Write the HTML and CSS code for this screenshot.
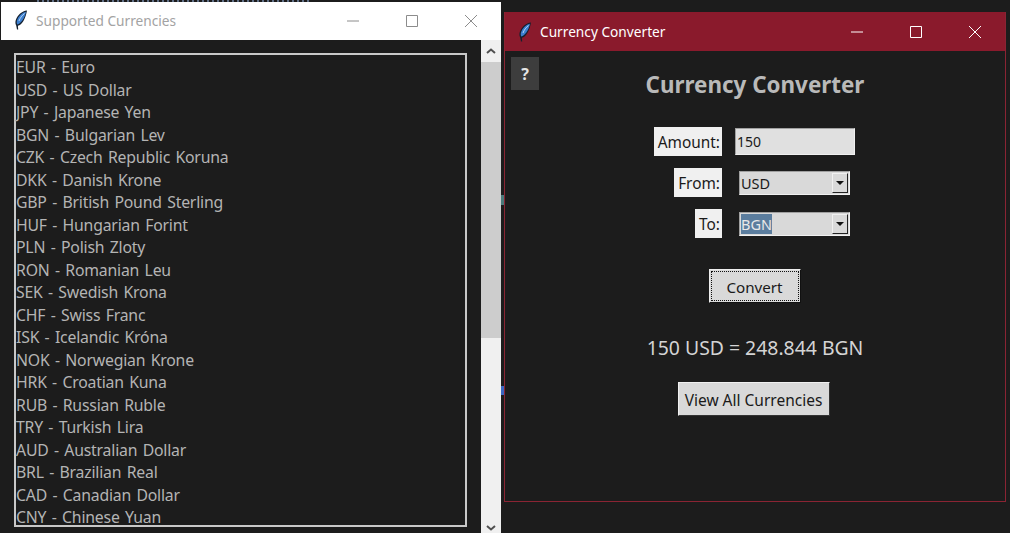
FILE: index.html
```html
<!DOCTYPE html>
<html>
<head>
	<title>Currency Converter</title>
	<link rel="stylesheet" href="styles.css">
</head>

<body>

	<svg width="0" height="0" class="defs">
		<symbol id="feather" viewBox="0 0 14 20">
			<path d="M13 .5 C8 1 3.500 5 1.800 10 C1.200 12 1.300 14 2.200 15.500 L3 19.500 L4.200 19.500 L3.900 15.800 C8 15 11.500 9 13 .5 Z" fill="#14202e"/>
			<path d="M12 1.800 C8 2.500 4.500 6 3 10.500 C2.600 12 2.700 13.500 3.300 14.500 C7 13.500 10.500 8.500 12 1.800 Z" fill="#3c7fd0"/>
			<path d="M10.500 3.500 C8 5.500 6 8 5 11" stroke="#b5d5f2" stroke-width="1" fill="none"/>
		</symbol>
	</svg>

	<!-- bits of whatever is behind the two windows -->
	<div class="behind behind-top"></div>
	<div class="behind behind-a"></div>
	<div class="behind behind-b"></div>

	<div class="window window-list">
		<div class="titlebar">
			<svg class="feather"><use href="#feather"/></svg>
			<span class="title">Supported Currencies</span>
			<div class="controls">
				<svg class="ctl" viewBox="0 0 12 12"><path d="M0 6H12"/></svg>
				<svg class="ctl" viewBox="0 0 12 12"><path d="M.5 .5H11.500V11.500H.5Z"/></svg>
				<svg class="ctl" viewBox="0 0 12 12"><path d="M0 0L12 12M12 0L0 12"/></svg>
			</div>
		</div>
		<div class="list-body">
			<div class="list-pane">
				<ul class="currencies">
					<li>EUR - Euro</li>
					<li>USD - US Dollar</li>
					<li>JPY - Japanese Yen</li>
					<li>BGN - Bulgarian Lev</li>
					<li>CZK - Czech Republic Koruna</li>
					<li>DKK - Danish Krone</li>
					<li>GBP - British Pound Sterling</li>
					<li>HUF - Hungarian Forint</li>
					<li>PLN - Polish Zloty</li>
					<li>RON - Romanian Leu</li>
					<li>SEK - Swedish Krona</li>
					<li>CHF - Swiss Franc</li>
					<li>ISK - Icelandic Króna</li>
					<li>NOK - Norwegian Krone</li>
					<li>HRK - Croatian Kuna</li>
					<li>RUB - Russian Ruble</li>
					<li>TRY - Turkish Lira</li>
					<li>AUD - Australian Dollar</li>
					<li>BRL - Brazilian Real</li>
					<li>CAD - Canadian Dollar</li>
					<li>CNY - Chinese Yuan</li>
				</ul>
			</div>
			<div class="scrollbar">
				<svg class="arrow" viewBox="0 0 10 6"><path d="M1 5L5 1.500L9 5"/></svg>
				<div class="thumb"></div>
				<div class="track"></div>
				<svg class="arrow" viewBox="0 0 10 6"><path d="M1 1L5 4.500L9 1"/></svg>
			</div>
		</div>
	</div>

	<div class="window window-main">
		<div class="titlebar titlebar-active">
			<svg class="feather"><use href="#feather"/></svg>
			<span class="title">Currency Converter</span>
			<div class="controls">
				<svg class="ctl" viewBox="0 0 12 12"><path d="M0 6H12"/></svg>
				<svg class="ctl" viewBox="0 0 12 12"><path d="M.5 .5H11.500V11.500H.5Z"/></svg>
				<svg class="ctl" viewBox="0 0 12 12"><path d="M0 0L12 12M12 0L0 12"/></svg>
			</div>
		</div>
		<div class="main-body">
			<button class="help">?</button>
			<div class="converter">
				<h1>Currency Converter</h1>
				<div class="form">
					<div class="row">
						<div class="label-col"><label>Amount:</label></div>
						<div class="entry">150</div>
					</div>
					<div class="row">
						<div class="label-col"><label>From:</label></div>
						<div class="combo"><span>USD</span><i class="drop"></i></div>
					</div>
					<div class="row">
						<div class="label-col"><label>To:</label></div>
						<div class="combo"><span class="selected">BGN</span><i class="drop"></i></div>
					</div>
				</div>
				<button class="btn btn-convert"><span>Convert</span></button>
				<p class="result">150 USD = 248.844 BGN</p>
				<button class="btn btn-view">View All Currencies</button>
			</div>
		</div>
	</div>

</body>
</html>
```

FILE: styles.css
```css
html, body {
	margin: 0;
	height: 100%;
}
body {
	position: relative;
	overflow: hidden;
	width: 1010px;
	height: 533px;
	background-color: #1c1c1c;
	font-family: "Noto Sans", "Open Sans", sans-serif;
	font-size: 16px;
}
.defs {
	position: absolute;
}

.behind {
	position: absolute;
}
.behind-top {
	left: 37px;
	top: 0;
	width: 273px;
	height: 2px;
	background-image: repeating-linear-gradient(to right, #5f6f86 0 2px, #1c1c1c 2px 5px);
}
.behind-a {
	left: 501px;
	top: 195px;
	width: 3px;
	height: 10px;
	background-color: #4a7a7a;
}
.behind-b {
	left: 501px;
	top: 386px;
	width: 3px;
	height: 9px;
	background-color: #3a66c0;
}

/* windows sit on a desktop, so these two are placed by hand */
.window {
	position: absolute;
	display: flex;
	flex-direction: column;
	box-sizing: border-box;
	background-color: #1c1c1c;
}
.window-list {
	left: 1px;
	top: 2px;
	width: 500px;
	height: 540px;
}
.window-main {
	left: 504px;
	top: 12px;
	width: 502px;
	height: 490px;
	border: 1px solid #8a2433;
	border-top: none;
}

.titlebar {
	display: flex;
	align-items: center;
	flex: none;
	height: 38px;
	background-color: #fff;
	color: #a3a3a3;
	font-size: 13.7px;
}
.window-list .title {
	margin-top: -2px;
}
.titlebar-active {
	height: 39px;
	background-color: #8a1a2c;
	color: #fff;
}
.feather {
	flex: none;
	width: 14px;
	height: 20px;
	margin-left: 13px;
	margin-right: 8px;
}
.window-list .feather {
	margin-top: -2px;
}
.title {
	flex: 1;
}
.controls {
	display: flex;
	align-items: center;
}
.ctl {
	width: 12px;
	height: 12px;
	padding: 0 17px;
	margin-left: 13px;
	fill: none;
	stroke: #8c8c8c;
	stroke-width: 1;
}
.controls .ctl:first-child {
	margin-left: 0;
}
.controls .ctl:last-child {
	margin-right: 7px;
}
.titlebar-active .ctl {
	stroke: #fff;
}

.list-body {
	display: flex;
	flex: 1;
	min-height: 0;
}
.list-pane {
	flex: 1;
	min-width: 0;
	padding: 13px 13px 0 13px;
}
.currencies {
	box-sizing: border-box;
	width: 453px;
	height: 474px;
	margin: 0;
	padding: 1px 0 0 0;
	list-style: none;
	border: 2px solid #c8c8c8;
	color: #b4b4b4;
	font-size: 15.8px;
	line-height: 22.5px;
	letter-spacing: -0.2px;
	word-spacing: 1.5px;
}

.scrollbar {
	display: flex;
	flex-direction: column;
	align-items: center;
	flex: none;
	width: 20px;
	height: 499px;
	background-color: #f0f0f0;
}
.arrow {
	flex: none;
	width: 10px;
	height: 6px;
	margin: 8px 0;
	fill: none;
	stroke: #505050;
	stroke-width: 2;
}
.thumb {
	flex: none;
	width: 100%;
	height: 276px;
	background-color: #cdcdcd;
}
.track {
	flex: 1;
}

.main-body {
	position: relative;
	flex: 1;
}
.help {
	position: absolute;
	left: 6px;
	top: 6px;
	width: 28px;
	height: 33px;
	padding: 0;
	border: none;
	background-color: #3d3d3d;
	color: #e6e6e6;
	font-family: inherit;
	font-size: 16px;
	font-weight: bold;
}
.converter {
	display: flex;
	flex-direction: column;
	align-items: center;
	padding-top: 18px;
}
h1 {
	margin: 0;
	color: #b9b9b9;
	font-size: 22.4px;
	font-weight: bold;
	line-height: 32px;
}

.form {
	display: flex;
	flex-direction: column;
	gap: 12px;
	width: 200px;
	margin-top: 26px;
	margin-right: 2px;
}
.row {
	display: flex;
	align-items: center;
	height: 29px;
}
.label-col {
	display: flex;
	justify-content: flex-end;
	flex: none;
	width: 68px;
	margin-right: 13px;
}
label {
	box-sizing: border-box;
	height: 29px;
	padding: 2px 2px 0 4px;
	background-color: #f0f0f0;
	color: #1a1a1a;
	font-size: 15.4px;
	line-height: 27px;
}
.entry {
	box-sizing: border-box;
	flex: none;
	width: 120px;
	height: 27px;
	padding-left: 1px;
	border: 1px solid #f0f0f0;
	border-color: #a0a0a0 #f0f0f0 #f0f0f0 #a0a0a0;
	background-color: #e0e0e0;
	color: #1a1a1a;
	font-size: 14px;
	line-height: 25px;
}
.combo {
	display: flex;
	align-items: center;
	justify-content: space-between;
	box-sizing: border-box;
	flex: none;
	width: 111px;
	height: 24px;
	margin-left: 4px;
	padding: 0 1px;
	border: 1px solid #f0f0f0;
	border-color: #a0a0a0 #f0f0f0 #f0f0f0 #a0a0a0;
	background-color: #d9d9d9;
	color: #1a1a1a;
	font-size: 14.5px;
}
.selected {
	background-color: #5b7d9e;
	color: #e8e8e8;
}
.drop {
	position: relative;
	box-sizing: border-box;
	flex: none;
	width: 16px;
	height: 20px;
	border: 1px solid #f0f0f0;
	border-color: #f0f0f0 #222 #222 #f0f0f0;
	background-color: #d9d9d9;
}
.drop::after {
	content: "";
	position: absolute;
	left: 3px;
	top: 7px;
	border-left: 4px solid transparent;
	border-right: 4px solid transparent;
	border-top: 4px solid #111;
}

.btn {
	box-sizing: border-box;
	padding: 0;
	border: 1px solid #f0f0f0;
	border-color: #f0f0f0 #333 #333 #f0f0f0;
	background-color: #d9d9d9;
	color: #1a1a1a;
	font-family: inherit;
	font-size: 15.2px;
}
.btn-convert {
	width: 92px;
	height: 34px;
	margin-top: 31px;
	margin-right: 1px;
	border-color: #eee #111 #111 #eee;
}
.btn-convert span {
	display: block;
	margin: 1px;
	padding-top: 2px;
	line-height: 26px;
	border: 1px dotted #111;
}
.result {
	margin: 30px 0 0;
	color: #d4d4d4;
	font-size: 19.4px;
	line-height: 30px;
}
.btn-view {
	width: 152px;
	height: 34px;
	margin-top: 19px;
	margin-right: 3px;
	padding-top: 2px;
	font-size: 15.5px;
}
```
